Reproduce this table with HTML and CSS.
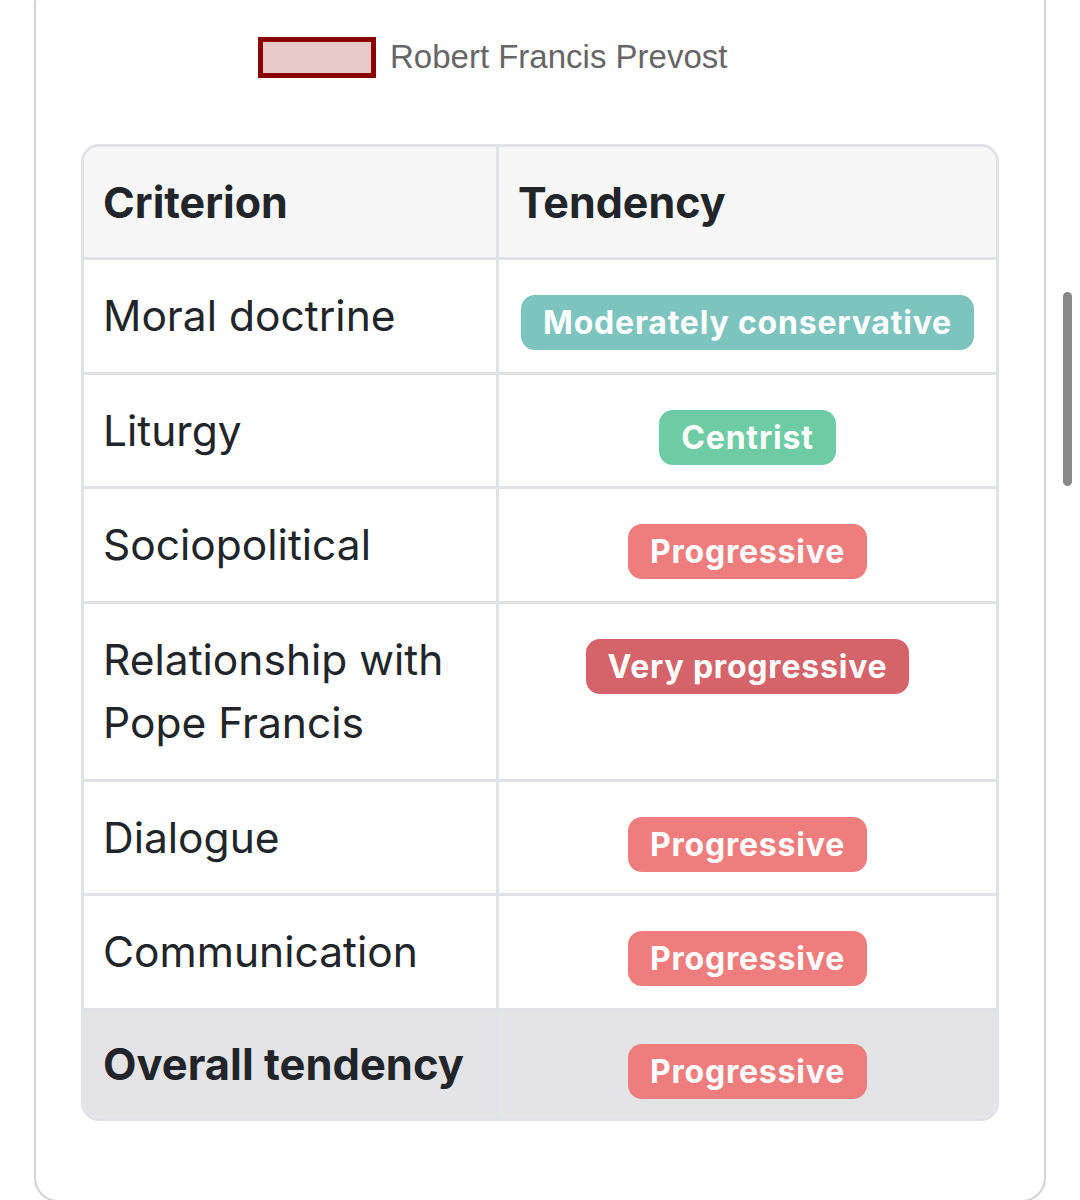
FILE: index.html
```html
<!DOCTYPE html>
<html lang="en">
<head>
<meta charset="utf-8">
<title>Tendency table</title>
<link rel="stylesheet" href="styles.css">
</head>
<body>
<div class="page">
  <div class="card">
    <div class="legend">
      <span class="legend-swatch"></span>
      <span class="legend-label">Robert Francis Prevost</span>
    </div>
    <table class="tendency">
      <thead>
        <tr><th>Criterion</th><th>Tendency</th></tr>
      </thead>
      <tbody>
        <tr><td>Moral doctrine</td><td class="c"><span class="badge mod-cons">Moderately conservative</span></td></tr>
        <tr><td>Liturgy</td><td class="c"><span class="badge centrist">Centrist</span></td></tr>
        <tr><td>Sociopolitical</td><td class="c"><span class="badge prog">Progressive</span></td></tr>
        <tr><td>Relationship with<br>Pope Francis</td><td class="c"><span class="badge very-prog">Very progressive</span></td></tr>
        <tr><td>Dialogue</td><td class="c"><span class="badge prog">Progressive</span></td></tr>
        <tr><td>Communication</td><td class="c"><span class="badge prog">Progressive</span></td></tr>
        <tr class="total"><td>Overall tendency</td><td class="c"><span class="badge prog">Progressive</span></td></tr>
      </tbody>
    </table>
  </div>
  <div class="scrollbar"></div>
</div>
</body>
</html>
```

FILE: styles.css
```css
html, body {
  margin: 0;
  padding: 0;
  background: #ffffff;
}
.page {
  position: relative;
  width: 1080px;
  height: 1200px;
  overflow: hidden;
}
.card {
  margin-left: 34px;
  margin-top: -20px;
  width: 1012px;
  height: 1222px;
  border: 2px solid #d4d4d8;
  border-radius: 24px;
  background: #ffffff;
  box-sizing: border-box;
  padding: 0 0 0 45px;
}
.legend {
  display: flex;
  align-items: center;
  gap: 14px;
  margin-top: 54px;
  padding-left: 177px;
  height: 42px;
}
.legend-swatch {
  width: 108px;
  height: 31px;
  background: #e8c9c9;
  border: 5px solid #8b0000;
}
.legend-label {
  font-family: "Liberation Sans", Arial, sans-serif;
  font-size: 33px;
  color: #666666;
}
.tendency {
  margin-top: 66px;
  width: 918px;
  border-collapse: separate;
  border-spacing: 0;
  border: 3px solid #e1e2e8;
  border-radius: 18px;
  overflow: hidden;
  font-family: Inter, "Noto Sans", sans-serif;
  color: #212529;
}
.tendency th, .tendency td {
  text-align: left;
  vertical-align: top;
  padding: 24px 19px;
  font-size: 42.5px;
  line-height: 63.5px;
  border-right: 3px solid #e1e2e8;
  border-bottom: 3px solid #e1e2e8;
}
.tendency th:last-child, .tendency td:last-child {
  border-right: none;
}
.tendency tr:last-child td {
  border-bottom: none;
}
.tendency th {
  background: #f7f7f8;
  font-weight: 700;
  font-size: 43px;
  line-height: 66px;
  padding-top: 22px;
  padding-bottom: 22px;
}
.tendency th:first-child, .tendency td:first-child {
  width: 374px;
}
.tendency td.c {
  text-align: center;
}
.tendency tr.total td {
  background: #e4e4e6;
  font-weight: 700;
  font-size: 43.5px;
  padding-top: 22px;
  padding-bottom: 22px;
}
.badge {
  display: inline-block;
  vertical-align: top;
  white-space: nowrap;
  margin-top: 11px;
  margin-bottom: -3px;
  height: 55px;
  line-height: 55px;
  padding: 0 22px;
  border-radius: 14px;
  font-size: 32px;
  font-weight: 700;
  color: #ffffff;
  letter-spacing: 0.8px;
}
.mod-cons { background: #7dc4bf; }
.centrist { background: #6dcba5; }
.prog { background: #ef7d7d; }
.very-prog { background: #d5636a; }
.scrollbar {
  position: absolute;
  left: 1063px;
  top: 292px;
  width: 9px;
  height: 194px;
  border-radius: 5px;
  background: #888888;
}
```
